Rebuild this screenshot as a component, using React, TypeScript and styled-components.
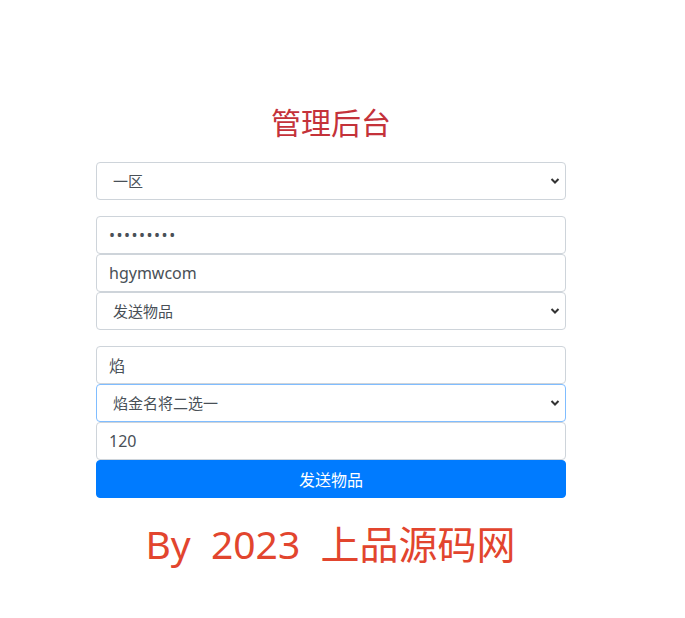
import React from 'react'
import styled, { createGlobalStyle } from 'styled-components'

const GlobalStyle = createGlobalStyle`
  html, body {
    margin: 0;
    padding: 0;
    background: #fff;
  }
  body {
    font-family: "Noto Sans", "Noto Sans CJK SC", sans-serif;
    color: #212529;
  }
`

const Page = styled.div`
  width: 685px;
  height: 618px;
  padding-top: 98px;
  box-sizing: border-box;
`

const Form = styled.form`
  width: 470px;
  margin-left: 96px;
  display: flex;
  flex-direction: column;
`

const Title = styled.h2`
  margin: 0 0 18px 0;
  text-align: center;
  font-family: "Noto Sans CJK SC", sans-serif;
  font-weight: 400;
  font-size: 30px;
  line-height: 46px;
  color: #c4323a;
`

const Group = styled.div`
  display: flex;
  flex-direction: column;
  margin-bottom: 16px;
`

const fieldBase = `
  display: block;
  width: 100%;
  height: 38px;
  box-sizing: border-box;
  border: 1px solid #ced4da;
  border-radius: 4px;
  background: #fff;
  color: #495057;
  font-size: 16px;
  line-height: 24px;
  font-family: "Noto Sans", "Noto Sans CJK SC", sans-serif;
  outline: none;
`

const Input = styled.input<{ $secret?: boolean }>`
  ${fieldBase}
  padding: 6px 12px;
  letter-spacing: ${p => (p.$secret ? '1.5px' : 'normal')};
`

const SelectBox = styled.div<{ $focus?: boolean }>`
  ${fieldBase}
  position: relative;
  padding: 6px 32px 6px 16px;
  border-color: ${p => (p.$focus ? '#80bdff' : '#ced4da')};
`

const SelectText = styled.span`
  font-family: "Noto Sans CJK SC", sans-serif;
  font-size: 15px;
`

const Chevron = styled.svg`
  position: absolute;
  right: 5px;
  top: 14px;
`

const SubmitButton = styled.button`
  display: block;
  width: 100%;
  height: 38px;
  border: 1px solid #007bff;
  border-radius: 4px;
  background: #007bff;
  color: #fff;
  font-family: "Noto Sans CJK SC", sans-serif;
  font-size: 16px;
  cursor: pointer;
`

const Footer = styled.div`
  margin-top: 19px;
  text-align: center;
  padding-right: 24px;
  white-space: pre;
  font-family: "Noto Sans", "Noto Sans CJK SC", sans-serif;
  font-size: 39px;
  line-height: 54px;
  color: #e2452e;
`

const Select = ({ text, focus }: { text: string; focus?: boolean }) => (
  <SelectBox $focus={focus}>
    <SelectText>{text}</SelectText>
    <Chevron width="10" height="8" viewBox="0 0 10 8">
      <path d="M1.5 2 L5 5.5 L8.5 2" fill="none" stroke="#333" strokeWidth="2" />
    </Chevron>
  </SelectBox>
)

const App = () => {
  return (
    <Page>
      <GlobalStyle />
      <Form onSubmit={e => e.preventDefault()}>
        <Title>管理后台</Title>
        <Group>
          <Select text="一区" />
        </Group>
        <Group>
          <Input type="password" $secret defaultValue="123456789" />
          <Input type="text" defaultValue="hgymwcom" />
          <Select text="发送物品" />
        </Group>
        <Input type="text" defaultValue="焰" />
        <Select text="焰金名将二选一" focus />
        <Input type="text" defaultValue="120" />
        <SubmitButton type="submit">发送物品</SubmitButton>
      </Form>
      <Footer>{'By  2023  上品源码网'}</Footer>
    </Page>
  )
}

export default App
